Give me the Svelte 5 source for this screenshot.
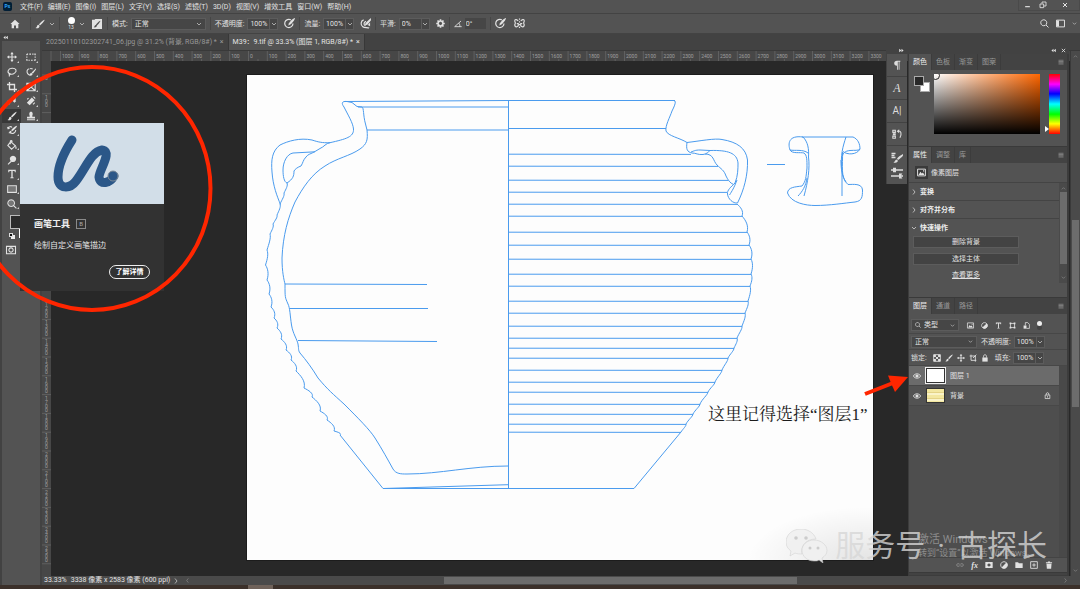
<script>
  const menus = ['文件(F)', '编辑(E)', '图像(I)', '图层(L)', '文字(Y)', '选择(S)', '滤镜(T)', '3D(D)', '视图(V)', '增效工具', '窗口(W)', '帮助(H)'];

  // every icon lives in a 12x12 box: s = stroked path, f = filled path
  const icons = {
    home: { f: 'M6 1 L11.5 6 H10 V11 H7.2 V7.8 H4.8 V11 H2 V6 H.5Z' },
    brush: { f: 'M11.2 .8 C8.5 2 6 4.6 4.8 6.5 L6 7.7 C8 6.2 10.5 3.5 11.6 1.2Z M4.2 7 C2.6 7 2.6 8.4 2.2 9.4 C1.9 10.2 1.2 10.6 .6 10.8 C2.6 11.8 5.4 11 5.5 8.3Z' },
    chev: { s: 'M2 4 L6 8 L10 4' },
    right: { s: 'M4 1 L8 6 L4 11' },
    left: { s: 'M8 1 L4 6 L8 11' },
    up: { s: 'M2 8 L6 4 L10 8' },
    brushPanel: { f: 'M0 1 H3 L4 0 H12 V12 H0Z M9.8 2 C7 3.5 5.5 5.6 4.6 7.2 C3 7.4 3.3 9 2 10 C4 10.5 5.6 10 5.7 8.2 C7.5 6.5 9 4.6 10.2 2.4Z' },
    pressure: { s: 'M7.5 2 A4.5 4.5 0 1 0 9.8 6', f: 'M11.6 0 C8.8 1.4 6.8 3.6 5.4 5.6 L4.6 8.2 L7 7 C9 5.4 11 3 12 .5Z' },
    airbrush: { s: 'M4 2 C.5 3 .5 8 3 9.5 C5 11 8 10 10 11 M6.5 3.5 C3.5 5 4 7.5 6 8.5', f: 'M11.8 0 L6 5.5 L5.4 8 L8 7.4 L12 2.4Z M8.5 7.5 L11 5 V9Z' },
    gear: { s: 'M6 2.7 A3.3 3.3 0 1 0 6.01 2.7 M6 .3 V2 M6 10 V11.7 M.3 6 H2 M10 6 H11.7 M2 2 L3.2 3.2 M8.8 8.8 L10 10 M2 10 L3.2 8.8 M8.8 3.2 L10 2', w: 2.2 },
    angle: { s: 'M10.5 1.5 L1 10 H11.5 M7 4.5 C8.6 6 9 8 8.6 10' },
    butterfly: { s: 'M6 .5 V2 M6 3.5 V5 M6 6.5 V8 M6 9.5 V11 M4.6 3 C1 0 0 2.5 1.5 5.5 C0 8 1.5 11.5 4.6 8.6 V6 H3 M7.4 3 C11 0 12 2.5 10.5 5.5 C12 8 10.5 11.5 7.4 8.6 V6 H9' },
    search: { s: 'M5 1 A4 4 0 1 0 5.01 1 M8 8 L11.3 11.3' },
    layout: { s: 'M.7 1.5 H11.3 V10.5 H.7Z', f: 'M1 2 H4 V10 H1Z' },
    min: { f: 'M2 7 H10 V9 H2Z' },
    restore: { s: 'M1.5 4.5 H7 V10 H1.5Z M4.5 4 V1.5 H10.5 V7.5 H7.5' },
    close: { s: 'M2 2 L10 10 M10 2 L2 10', w: 2 },
    menu: { s: 'M1 2.5 H11 M1 5 H11 M1 7.5 H11 M1 10 H11' },
    dblLeft: { f: 'M6 2 V10 L1 6Z M11.5 2 V10 L6.5 6Z' },
    dblRight: { f: 'M6 2 V10 L11 6Z M.5 2 V10 L5.5 6Z' },
    move: { s: 'M6 1 V11 M1 6 H11', f: 'M6 0 L8 2.6 H4Z M6 12 L8 9.4 H4Z M0 6 L2.6 4 V8Z M12 6 L9.4 4 V8Z' },
    marquee: { s: 'M1 2.5 H2.5 M4 2.5 H6 M7.5 2.5 H9 M10 2.5 H11 V4 M11 5.5 V7 M11 8.5 V9.8 H9.5 M8 9.8 H6 M4.5 9.8 H3 M2 9.8 H1 V8.5 M1 7 V5.5 M1 4 V2.5' },
    lasso: { s: 'M3 8 C0 6.5 .8 2 6 1.6 C11 1.3 12.3 5 9.4 7 C7.5 8.6 4.5 8.8 3 8 C1.8 9 3.6 9.4 2.6 11.4 M3 8 C4.4 7.4 4 9.4 2.4 9' },
    quick: { s: 'M4 2 C1 2.5 .6 6 2 8 C3 9.5 4.5 9.8 5.5 9.8 M5 2 C6 1.6 7 2 8 2.5', f: 'M12 1.6 L6.8 6.6 L8.2 8 L12 3Z M6.3 7 C4.7 7.4 5.2 9 4 10 C6 10.8 7.8 10 7.8 8.4Z' },
    crop: { s: 'M3 0 V9 H12 M0 3 H9 V12', w: 1.6 },
    frame: { s: 'M1 1.5 H11 V10.5 H1Z M1 1.5 L11 10.5 M11 1.5 L1 10.5' },
    eyedrop: { f: 'M1 5 L5 4 L7 2 C9 0 12 2.5 10 5 L11 6 L9 8 L6 5 L3 10 L1 10.5Z' },
    heal: { f: 'M1 8 L7 1.8 L10.4 5 L4.4 11.2Z M8 1 C9.5 0 12 2 11 4Z', s: 'M1.5 4 L3 2.5 M8.4 10 L10.6 8' },
    stamp: { f: 'M4.6 6 C3.6 4 3.6 .8 6 .8 C8.4 .8 8.4 4 7.4 6 L7.8 7 H10.8 V9 H1.2 V7 H4.2Z M1.2 10 H10.8 V11.2 H1.2Z' },
    history: { s: 'M1 4 C2 1.5 5 1.5 6 3 M4 9.5 C7 11.5 10.5 9 10.5 6', f: 'M0 2 L1 5.5 L4 4Z M11.6 1 C9 2 6.2 4.5 5 6.2 L6.2 7.4 C8.4 6 10.8 3.6 12 1.4Z M4.4 6.8 C2.8 7 3.3 8.6 1.6 9.6 C4 10.2 5.5 9.6 5.6 8Z' },
    bucket: { s: 'M4.5 2 L10 7 L5.5 11 L1 6.5Z M4 5 V1.5 C4 .4 6 .4 6 1.5 V4', f: 'M10.2 6 C11 7.5 11.8 9 11.6 10 C11 11.4 9.6 10.6 10 9Z' },
    dodge: { f: 'M7.2 .8 A3.8 3.8 0 1 1 7.19 .8Z M4.6 7 L5.6 8 L1.6 11.6 L.8 10.8Z' },
    type: { f: 'M1.5 1 H10.5 V3.8 H9.5 L9 2.4 H6.8 V9.8 L8 10.2 V11 H4 V10.2 L5.2 9.8 V2.4 H3 L2.5 3.8 H1.5Z' },
    rect: { s: 'M.8 2 H11.2 V10 H.8Z', g: 'M1.5 2.6 H10.5 V9.4 H1.5Z' },
    zoom: { s: 'M5 1 A4 4 0 1 0 5.01 1 M8 8 L11.3 11.3', g: 'M5 2 A3 3 0 1 0 5.01 2' },
    mask: { s: 'M.6 1.6 H11.4 V10.4 H.6Z M6 3.4 A2.6 2.6 0 1 0 6.01 3.4' },
    pilcrow: { f: 'M6 .8 C1.6 .8 1.6 6.8 6 6.8 V11.6 H7 V2 H8 V11.6 H9 V2 H10 V.8Z' },
    actions: { s: 'M1 1.5 H4 V4 H1Z M1 8.5 H4 V11 H1Z M7 2.5 C11 1.5 12 6 9.5 10.5', f: 'M1 5 H4.5 V7.6 H1Z M5.6 2.6 L8.6 .4 V5Z' },
    brushes: { s: 'M.5 1.5 H4.5 M.5 3.5 H3.5 M.5 5.5 H4.5', f: 'M12 2 C9 3.5 7 5 6 6.8 L7 8 C9 6.8 11.2 4.8 12 3.4Z M5.6 7.4 C4 7.6 4.2 9.4 2.4 10.4 C5 11.4 7 10.4 6.8 8.6Z' },
    sliders: { s: 'M0 3 H12 M0 9 H12', f: 'M2 .8 H5 V5.2 H2Z M8 6.4 H11.4 L9.6 9 L11.4 11.6 H8Z' },
    picture: { s: 'M.8 1.5 H11.2 V10.5 H.8Z', f: 'M2 9.4 L4.6 5 L6.4 7.4 L8 6 L10 9.4Z M8 3 H9.6 V4.6 H8Z' },
    adjust: { s: 'M6 1 A5 5 0 1 0 6.01 1', f: 'M9.6 2.4 A5 5 0 0 1 2.4 9.6Z' },
    shape: { s: 'M2.5 2.5 H9.5 V9.5 H2.5Z', f: 'M1 1 H4 V4 H1Z M8 1 H11 V4 H8Z M1 8 H4 V11 H1Z M8 8 H11 V11 H8Z' },
    smart: { s: 'M4 6 V1 H8 L11 4 V11 H6', f: 'M1 6 H6 V11.4 H1Z' },
    checker: { s: 'M1 1 H11 V11 H1Z', f: 'M1 1 H4.4 V4.4 H1Z M7.6 1 H11 V4.4 H7.6Z M4.4 4.4 H7.6 V7.6 H4.4Z M1 7.6 H4.4 V11 H1Z M7.6 7.6 H11 V11 H7.6Z' },
    artboard: { s: 'M3 1 V9.5 H11 M1 3 H9.5 V11.5 M6 6 L11 1' },
    lock: { f: 'M2 5.2 H10 V11.4 H2Z', s: 'M3.8 5.4 V3.4 C3.8 .4 8.2 .4 8.2 3.4 V5.4' },
    lockOpen: { s: 'M2 5.2 H10 V11.2 H2Z M3.8 5.2 V3.4 C3.8 .4 8.2 .4 8.2 3.4 V5.2 M6 7 V9.5' },
    eye: { s: 'M.5 6 C3 1.6 9 1.6 11.5 6 C9 10.4 3 10.4 .5 6Z', f: 'M6 3.6 A2.4 2.4 0 1 0 6.01 3.6' },
    link: { s: 'M5 4 H3 A2 2 0 0 0 3 8 H5 M7 4 H9 A2 2 0 0 1 9 8 H7 M4 6 H8' },
    maskAdd: { f: 'M.5 1.5 H11.5 V10.5 H.5Z M6 3.6 A2.4 2.4 0 1 0 6.01 3.6' },
    folder: { f: 'M.5 2 H4.6 L5.8 3.4 H11.5 V10.5 H.5Z' },
    plus: { s: 'M1 1 H11 V11 H1Z M6 3.4 V8.6 M3.4 6 H8.6' },
    trash: { f: 'M1.4 2 H4.4 V.8 H7.6 V2 H10.6 V3.4 H1.4Z M2.2 4.2 H9.8 L9.2 11.6 H2.8Z' }
  };

  const tools = [
    'move', 'marquee', 'lasso', 'quick', 'crop', 'frame', 'eyedrop', 'heal', 'brush', 'stamp',
    'history', 'heal', 'bucket', 'adjust', 'dodge', 'pressure', 'type', 'move', 'rect', 'move', 'zoom', 'layout'
  ];

  const ticksX = Array.from({ length: 44 }, (_, i) => ({ x: 8 + i * 18.8, label: Math.abs(i - 10) * 100 }));

  // no numbers where the tool hint covers the ruler
  const ticksY = Array.from({ length: 28 }, (_, i) => {
    const y = 14 + (i - 1) * 18.8;
    const shown = (y > 0 && y < 40) || (y > 226 && y < 495);
    return { y, label: shown ? String(Math.abs(i - 1) * 100) : '' };
  });

  // right half of the jar: height of each groove and where it meets the wall
  const grooves = [
    [691, 154], [718, 166], [728, 180], [727, 192], [737, 204], [742, 216], [747, 232], [749, 245], [751, 259],
    [751, 274], [750, 286], [748, 301], [745, 313], [742, 326], [737, 338], [734, 348], [728, 358],
    [722, 370], [715, 382], [708, 392], [700, 404], [693, 414], [686, 424], [681, 432]
  ];

  const leftWall = [
    [287, 183], [284, 193], [280, 204], [277, 215], [273, 224], [270, 234], [267, 250], [265.5, 265], [267, 280],
    [269, 294], [271, 307], [274, 318], [277, 328], [281, 339], [286, 350], [291, 360], [296, 371], [304, 388],
    [312, 397], [320, 411], [327, 420], [334, 431], [340, 435]
  ];

  function scallop(points, bulge) {
    let d = 'M' + points[0];
    for (let i = 1; i < points.length; i++) {
      const [ax, ay] = points[i - 1];
      const [bx, by] = points[i];
      const dx = bx - ax;
      const dy = by - ay;
      d += ` C${ax + dx * 0.3 + bulge} ${ay + dy * 0.25} ${bx + bulge} ${ay + dy * 0.6} ${bx} ${by}`;
    }
    return d;
  }

  const rightEdge = scallop(grooves.slice(4), 2) + ' L634 488.5';
  const leftEdge = scallop(leftWall, 2) + ' L383 488.5';

  const filters = ['picture', 'adjust', 'type', 'shape', 'smart'];
  const locks = ['checker', 'brush', 'move', 'artboard', 'lock'];
  const footer = ['link', 'fx', 'maskAdd', 'adjust', 'folder', 'plus', 'trash'];
</script>

{#snippet icon(name, size = 10)}
  <svg class="icon" width={size} height={size} viewBox="0 0 12 12" aria-hidden="true">
    {#if icons[name].g}<path class="dim" d={icons[name].g} />{/if}
    {#if icons[name].f}<path class="solid" d={icons[name].f} />{/if}
    {#if icons[name].s}<path class="line" d={icons[name].s} stroke-width={icons[name].w ?? 1.3} />{/if}
  </svg>
{/snippet}

{#snippet percent(label, value)}
  <label class="field">
    <span>{label}:</span>
    <span class="num"><input {value} /><span class="drop">{@render icon('chev', 6)}</span></span>
  </label>
{/snippet}

<div class="app">
  <header class="menubar">
    <span class="ps">Ps</span>
    <nav>
      {#each menus as item}<button>{item}</button>{/each}
    </nav>
    <div class="window-buttons">
      <button aria-label="最小化">{@render icon('min', 7)}</button>
      <button aria-label="还原">{@render icon('restore', 8)}</button>
      <button class="wide" aria-label="关闭">{@render icon('close', 6)}</button>
    </div>
  </header>

  <div class="options">
    <button class="home" aria-label="主页">{@render icon('home')}</button>
    <div class="group brush-pick">
      <button aria-label="画笔">{@render icon('brush', 10)}</button>{@render icon('chev', 6)}
    </div>
    <div class="group tip-pick">
      <button class="tip" aria-label="画笔大小"><i></i>13</button>{@render icon('chev', 6)}
      <button class="panel-button" aria-label="画笔设置">{@render icon('brushPanel', 10)}</button>
    </div>
    <div class="group">
      <label class="field"><span>模式:</span>
        <span class="pick mode"><select><option>正常</option></select>{@render icon('chev', 6)}</span>
      </label>
    </div>
    <div class="group">
      {@render percent('不透明度', '100%')}
      <button aria-label="不透明度压力">{@render icon('pressure', 11)}</button>
    </div>
    <div class="group">
      {@render percent('流量', '100%')}
      <button aria-label="喷枪">{@render icon('airbrush', 11)}</button>
    </div>
    <div class="group">
      {@render percent('平滑', '0%')}
      <button aria-label="平滑选项">{@render icon('gear', 9)}</button>
    </div>
    <div class="group angle">
      <label class="field">{@render icon('angle', 8)}<input aria-label="角度" value="0°" /></label>
    </div>
    <div class="group last">
      <button aria-label="大小压力">{@render icon('pressure', 11)}</button>
      <button aria-label="对称">{@render icon('butterfly', 11)}</button>
    </div>
    <div class="options-right">
      <button aria-label="搜索">{@render icon('search', 9)}</button>
      <button aria-label="工作区">{@render icon('layout', 9)}</button>
      {@render icon('chev', 5)}
    </div>
  </div>

  <div class="workspace">
    <aside class="toolbar">
      <div class="collapse">{@render icon('dblLeft', 5)}</div>
      <div class="tool-body">
        <div class="tools">
          {#each tools as tool, i}
            <button class:active={i === 8} aria-label={tool}>{@render icon(tool, 10)}</button>
          {/each}
        </div>
        <div class="swatches"><i class="fore"></i><i class="back"></i><i class="reset"></i></div>
        <button class="quick-mask" aria-label="快速蒙版">{@render icon('mask', 10)}</button>
      </div>
    </aside>

    <main class="document">
      <div class="tabs">
        <button>20250110102302741_06.jpg @ 31.2% (背景, RGB/8#) *<b>×</b></button>
        <button class="current">M39：9.tif @ 33.3% (图层 1, RGB/8#) *<b>×</b></button>
      </div>

      <div class="view">
        <div class="view-main">
          <svg class="ruler-x" aria-hidden="true">
            <line class="edge" x1="9" y1="0" x2="9" y2="10" />
            {#each ticksX as tick}
              <line x1={tick.x + 10.5} y1="0" x2={tick.x + 10.5} y2="10" />
              <line x1={tick.x + 20} y1="8" x2={tick.x + 20} y2="10" />
              <text x={tick.x + 12} y="7">{tick.label}</text>
            {/each}
          </svg>
          <div class="stage-row">
            <svg class="ruler-y" aria-hidden="true">
              {#each ticksY as tick}
                <line x1="0" y1={tick.y} x2="9" y2={tick.y} />
                {#each tick.label as digit, n}
                  <text x="3" y={tick.y + 5 + n * 4}>{digit}</text>
                {/each}
              {/each}
            </svg>
            <div class="stage">
              <svg class="artboard" width="626" height="485" viewBox="247 75 626 485">
                <defs>
                  <radialGradient id="haze" cx="0.5" cy="0.65" r="0.5">
                    <stop offset="0" stop-color="#000" stop-opacity=".1" />
                    <stop offset="1" stop-color="#000" stop-opacity="0" />
                  </radialGradient>
                </defs>
                <g class="drawing">
                  <path d="M345 101.5 L508 100.5 L675 100.5" />
                  <path d="M358 107 H508 M367 130 H508 M508 128.5 H666" />
                  <path d="M508.5 100.5 V488.5 M383 488.5 H634" />
                  <path d="M285 284 L427 284.5 M289.5 308.5 H428 M298 340.5 L437 341.5" />
                  <path d="M347 101.5 C342 101 341 103 344 107 C348 115 353 123 353.5 129 C354 137 346 139 330 142.7 C322 143 318 142 312 140 C300 137.5 288 141 280 145 C272 151 271 160 272 172 C273 186 277 196 280.5 204.5" />
                  <path d="M330 142.7 C326 143 324 147 320 148.5 L315 151.5 C311 154 308 154 306 157 C303 160 303 163 301 166 C298 167 295 169 294 171 C294 176 293 179 287 183 C284 182 283 176 283 170 C283 162 287 154 293 153 L315 151.8" />
                  <path d={leftEdge} />
                  <path d="M347 101.5 L352 102.5 L357 106.5 L362 107 C364 108 363 115 365.5 124 L367 130 C368 140 367 144 360 149 C350 156 337 158 325 166 C312 174 303 187 295 202 C288 218 283 235 282 258 C282 272 284 280 285 284 C285 298 285 297 288 304 C290 308 290 315 291.5 325 C293 334 297 339 298 344 C299 350 298 350 300 353 C306 360 312 368 318 378 C328 390 333 394 344 404 C358 418 370 430 375 438 C382 449 388 460 393 469 C396 474 401 474 407 474 C440 474 470 466 508 466 M383 488.5 L508 484.7" />
                  {#each grooves as [x, y]}
                    <path d="M508 {y + 0.2} L{x} {y + 0.4}" />
                  {/each}
                  <path d={rightEdge} />
                  <path d="M674 100.5 C677 101 674 107 672 111 C670 117 665 126 666 131 C668 136 680 138 687 142.5 C700 141 715 138 722 139.5 C737 142 746 148 747.5 160 C748 175 744 190 737.5 203 C733 203.5 728 199 727.5 194 C727 190 731 187 735 183 C738 176 738 168 738 163 C737 153 728 150 710 150.5 L700 150 C695 150 694 151 691 152 M687 142.5 C686 149 687 152 692 153 C696 153 698 155 703 154.5 C707 154 708 152 710 150.5" />
                  <path d="M705 154 C714 154 713 161 717 165 C721 169 724 170 726 176 C728 180 730 183 733.5 184.5 M737 180 C734 188 732 191 729.5 195" />
                  <path d="M767 164.5 H785" />
                  <path d="M802 137 H853 C858 139 860 144 860 149 C858 151 855 150 850 150.5 C845 151 843 153 842.5 156 M843 151.5 C847 155 857 155 860 149" />
                  <path d="M803 137 C788 135 788 144 790 150 C792 154 800 152 804 153 C807 155 807 160 807 168 C806 177 806 181 802 186 C795 187 788 187 787.5 193 C791 203 806 205.5 815 205.5 C830 205.5 845 203 855 202 C862 201 862.5 197 862.5 190 C862 183 853 184.5 848 184.5 C840 178 843 165 842.5 152" />
                  <path d="M803 137 C808 142 809 149 808.5 157 C810 168 808 182 804 196 M807 178 C806 186 802 192 798 196 M790 150 C795 151 803 149 808 153 M846 137 C843 146 840 156 842 170 L842 196 M841 160 C841 170 842 176 846 182" />
                </g>
                <rect x="747" y="490" width="240" height="110" fill="url(#haze)" />
                <text class="note" x="708" y="420">这里记得选择“图层1”</text>
              </svg>
            </div>
          </div>
        </div>
        <div class="scroll-y">
          {@render icon('up', 5)}<i></i>{@render icon('chev', 5)}
        </div>
      </div>

      <footer class="status">
        <span>33.33%</span>
        <span class="size">3338 像素 x 2583 像素 (600 ppi)</span>
        {@render icon('right', 6)}
        <div class="scroll-x">{@render icon('left', 5)}<i></i>{@render icon('right', 5)}</div>
      </footer>

      <div class="dock">
        <div class="dock-head">
          {@render icon('dblRight', 5)}<span></span>{@render icon('dblLeft', 5)}{@render icon('close', 5)}
        </div>
        <div class="dock-body">
          <div class="strip">
            <button aria-label="段落">{@render icon('pilcrow', 10)}</button>
            <button class="script" aria-label="字形">A</button>
            <button class="char" aria-label="字符">A|</button>
            <button aria-label="动作">{@render icon('actions', 10)}</button>
            <div class="pair">
              <button aria-label="画笔">{@render icon('brushes', 12)}</button>
              <button aria-label="画笔设置">{@render icon('sliders', 12)}</button>
            </div>
          </div>

          <div class="panels">
            <section class="color">
              <div class="panel-tabs">
                <button class="on">颜色</button><button>色板</button><button>渐变</button><button>图案</button>
                {@render icon('menu', 6)}
              </div>
              <div class="color-body">
                <div class="chips"><i class="fg"></i><i class="bg"></i></div>
                <div class="field-box"></div>
                <div class="hue"></div>
              </div>
            </section>

            <section class="props">
              <div class="panel-tabs">
                <button class="on">属性</button><button>调整</button><button>库</button>
                {@render icon('menu', 6)}
              </div>
              <div class="kind"><span>{@render icon('picture', 9)}</span>像素图层</div>
              <div class="props-body">
                <div class="props-list">
                  <h3>{@render icon('right', 6)}变换</h3>
                  <h3>{@render icon('right', 6)}对齐并分布</h3>
                  <h3 class="open">{@render icon('chev', 6)}快速操作</h3>
                  <div class="quick">
                    <button>删除背景</button>
                    <button>选择主体</button>
                    <a href="#more">查看更多</a>
                  </div>
                </div>
                <div class="mini-scroll">{@render icon('up', 5)}<i></i>{@render icon('chev', 5)}</div>
              </div>
            </section>

            <section class="layers">
              <div class="panel-tabs">
                <button class="on">图层</button><button>通道</button><button>路径</button>
                {@render icon('menu', 6)}
              </div>
              <div class="layer-row filter">
                <label class="pick kind-pick">{@render icon('search', 6)}<select aria-label="类型"><option>类型</option></select>{@render icon('chev', 5)}</label>
                <div class="filters">
                  {#each filters as name}<button aria-label={name}>{@render icon(name, 7)}</button>{/each}
                  <i class="switch"></i>
                </div>
              </div>
              <div class="layer-row">
                <label class="pick blend"><select aria-label="混合模式"><option>正常</option></select>{@render icon('chev', 5)}</label>
                {@render percent('不透明度', '100%')}
              </div>
              <div class="layer-row">
                <span class="lock-label">锁定:</span>
                <div class="locks">
                  {#each locks as name}<button aria-label={name}>{@render icon(name, 8)}</button>{/each}
                </div>
                {@render percent('填充', '100%')}
              </div>
              <ul>
                <li class="selected">{@render icon('eye', 8)}<span class="thumb"></span>图层 1</li>
                <li>{@render icon('eye', 8)}<span class="thumb map"></span>背景<span class="lock">{@render icon('lockOpen', 7)}</span></li>
              </ul>
              <div class="layer-footer">
                {#each footer as name}
                  <button class:off={name === 'link'} aria-label={name}>
                    {#if name === 'fx'}<em>fx</em>{:else}{@render icon(name, 8)}{/if}
                  </button>
                {/each}
              </div>
            </section>
          </div>
        </div>
      </div>
    </main>
  </div>

  <div class="taskbar"><i></i></div>

  <div class="tooltip">
    <svg viewBox="0 0 144 81">
      <path d="M52 17 C43 31 38 45 38 54 C38 67 50 66 56 58 C66 45 71 29 82 27 C93 28 79 47 79 54 C80 63 90 60 94 53" />
      <circle cx="93" cy="53" r="5" />
    </svg>
    <div class="tooltip-text">
      <h2>画笔工具 <kbd>B</kbd></h2>
      <p>绘制自定义画笔描边</p>
      <button>了解详情</button>
    </div>
  </div>

  <svg class="marks" width="1080" height="589" aria-hidden="true">
    <ellipse cx="92" cy="188.5" rx="118.5" ry="121.5" />
    <path class="shaft" d="M865 394 L893 383" />
    <path class="head" d="M908 377 L888 375.5 L891 383 L895 392Z" />
  </svg>

  <div class="activate">
    <p>激活 Windows</p>
    <small>转到“设置”以激活 Windows。</small>
  </div>

  <div class="watermark">
    <svg width="42" height="34" viewBox="0 0 42 34">
      <path d="M15 0 C6 0 0 6 0 13 C0 17 2 20 5 22 L4 27 L9 24 C11 25 14 25 16 25 C14 17 20 10 30 10 C28 4 22 0 15 0Z" />
      <path d="M28 11 C21 11 16 16 16 21.5 C16 27 21 32 28 32 C30 32 32 32 33 31 L37 34 L36 29 C39 27 41 25 41 21.5 C41 16 35 11 28 11Z" />
      <g><circle cx="10" cy="9" r="1.8" /><circle cx="20" cy="9" r="1.8" /><circle cx="24" cy="19" r="1.5" /><circle cx="32" cy="19" r="1.5" /></g>
    </svg>
    <div class="account"><span>服务号</span><span>·</span><span>古探长</span></div>
  </div>
</div>

<style>
  :global(body) {
    margin: 0;
    background: #282828;
    overflow: hidden;
  }

  .app {
    position: relative;
    display: flex;
    flex-direction: column;
    height: 100vh;
    overflow: hidden;
    color: #e2e2e2;
    font: 7px/10px Roboto, "Noto Sans CJK SC", sans-serif;
  }

  .app :is(*, *::before, *::after) {
    box-sizing: border-box;
  }

  button, input, select {
    margin: 0;
    padding: 0;
    border: 0;
    background: none;
    color: inherit;
    font: inherit;
    white-space: nowrap;
  }

  button {
    display: flex;
    align-items: center;
    justify-content: center;
  }

  i {
    display: block;
  }

  .icon {
    flex: none;
    display: block;
    overflow: visible;
  }

  .icon path {
    fill: none;
  }

  .icon .solid {
    fill: currentColor;
    fill-rule: evenodd;
  }

  .icon .dim {
    fill: #777;
  }

  .icon .line {
    stroke: currentColor;
  }

  /* top bars */
  .menubar {
    display: flex;
    align-items: center;
    height: 14px;
    padding-left: 3px;
    background: #535353;
    border-bottom: 1px solid #434343;
  }

  .ps {
    width: 9px;
    height: 9px;
    border-radius: 2px;
    background: #001e36;
    color: #31a8ff;
    font-size: 5px;
    font-weight: 700;
    line-height: 9px;
    text-align: center;
  }

  nav {
    display: flex;
    gap: 5px;
    margin-left: 8px;
  }

  .window-buttons {
    display: flex;
    height: 11px;
    margin: 0 0 2px auto;
    border: 1px solid #4a4a4a;
    border-top: 0;
  }

  .window-buttons button {
    width: 16px;
  }

  .window-buttons .wide {
    width: 28px;
  }

  .options {
    display: flex;
    align-items: center;
    height: 20px;
    background: #535353;
    border-bottom: 1px solid #434343;
  }

  .home {
    width: 30px;
  }

  .group {
    display: flex;
    align-items: center;
    gap: 6px;
    height: 13px;
    padding: 0 4px;
    border-left: 1px solid #464646;
  }

  .brush-pick {
    gap: 4px;
  }

  .tip-pick {
    gap: 1px;
  }

  .tip {
    flex-direction: column;
    width: 14px;
    font-size: 5px;
    line-height: 7px;
  }

  .tip i {
    width: 7px;
    height: 7px;
    border-radius: 50%;
    background: #fff;
  }

  .panel-button {
    margin: 0 1px 0 6px;
  }

  .field {
    display: flex;
    align-items: center;
    gap: 3px;
  }

  .num {
    display: flex;
    height: 12px;
    border: 1px solid #5c5c5c;
    background: #464646;
  }

  .num input {
    width: 21px;
    padding-left: 2px;
  }

  .drop {
    display: flex;
    align-items: center;
    justify-content: center;
    width: 8px;
    border-left: 1px solid #5c5c5c;
  }

  .pick {
    display: flex;
    align-items: center;
    height: 12px;
    padding: 0 3px;
    border: 1px solid #5c5c5c;
    background: #464646;
  }

  .pick select {
    flex: 1;
    min-width: 0;
    appearance: none;
  }

  .mode {
    width: 75px;
  }

  .angle input {
    width: 21px;
    height: 11px;
    padding-left: 1px;
    background: #464646;
  }

  .last {
    gap: 8px;
  }

  .options-right {
    display: flex;
    align-items: center;
    gap: 7px;
    margin-left: auto;
    padding-right: 3px;
  }

  /* tools */
  .workspace {
    display: flex;
    flex: 1;
    min-height: 0;
    background: #424242;
  }

  .toolbar {
    display: flex;
    flex-direction: column;
    width: 42px;
    padding: 0 2px;
  }

  .collapse {
    height: 7px;
    padding: 1px;
  }

  .tool-body {
    flex: 1;
    padding-top: 9px;
    background: #535353;
  }

  .tools {
    display: grid;
    grid-template-columns: 1fr 1fr;
    grid-auto-rows: 1fr;
    height: 161px;
  }

  .tools button {
    position: relative;
  }

  .tools button::after {
    content: "";
    position: absolute;
    right: 2px;
    bottom: 2px;
    border: 1px solid;
    border-color: transparent #ccc #ccc transparent;
  }

  .tools .active {
    background: #383838;
  }

  .swatches {
    position: relative;
    isolation: isolate;
    height: 30px;
  }

  .swatches i {
    position: absolute;
  }

  .fore {
    left: 8px;
    top: 4px;
    z-index: 1;
    width: 14px;
    height: 14px;
    border: 1px solid #bbb;
    background: #2b2b2b;
  }

  .back {
    left: 17px;
    top: 14px;
    width: 14px;
    height: 13px;
    background: #fff;
  }

  .reset {
    left: 7px;
    top: 22px;
    width: 4px;
    height: 4px;
    background: #111;
    border: 1px solid #ddd;
    box-shadow: 2px 2px #eee;
  }

  .quick-mask {
    width: 18px;
    height: 18px;
  }

  /* document */
  .document {
    position: relative;
    display: flex;
    flex: 1;
    flex-direction: column;
    min-width: 0;
  }

  .tabs {
    display: flex;
    height: 17px;
    border-bottom: 1px solid #393939;
  }

  .tabs button {
    gap: 3px;
    padding: 0 4px;
    border-right: 1px solid #383838;
    color: #989898;
  }

  .tabs .current {
    background: #535353;
    color: #e4e4e4;
  }

  .tabs b {
    font-weight: 400;
  }

  .view {
    display: flex;
    flex: 1;
    min-height: 0;
  }

  .view-main {
    display: flex;
    flex: 1;
    flex-direction: column;
    min-width: 0;
  }

  .ruler-x {
    width: 100%;
    height: 10px;
    background: #474747;
  }

  .ruler-y {
    width: 9px;
    height: 100%;
    background: #474747;
  }

  .ruler-x line,
  .ruler-y line {
    stroke: #606060;
  }

  .ruler-x text,
  .ruler-y text {
    fill: #a0a0a0;
    font-size: 5px;
  }

  .stage-row {
    display: flex;
    flex: 1;
    min-height: 0;
  }

  .stage {
    flex: 1;
    padding: 14px 0 0 196px;
    background: #282828;
  }

  .artboard {
    display: block;
    background: #fdfdfd;
    box-shadow: 0 0 0 1px #1c1c1c;
  }

  .drawing path {
    fill: none;
    stroke: #4a9bee;
    stroke-width: 1;
  }

  .note {
    fill: #1c1c1c;
    font: 17px "Liberation Serif", "Noto Serif CJK SC", "Noto Sans CJK SC", serif;
  }

  .scroll-y {
    display: flex;
    flex-direction: column;
    align-items: center;
    width: 10px;
    padding: 3px 0;
    border-left: 1px solid #3a3a3a;
    background: #4a4a4a;
    color: #999;
  }

  .scroll-y i {
    width: 7px;
    height: 36%;
    margin: 161px 0 auto;
    background: #6c6c6c;
  }

  .status {
    display: flex;
    align-items: center;
    gap: 3px;
    height: 9px;
    padding-left: 2px;
    background: #4a4a4a;
    line-height: 9px;
    white-space: nowrap;
  }

  .size {
    padding-left: 1px;
  }

  .scroll-x {
    display: flex;
    flex: 1;
    align-items: center;
    height: 9px;
    padding: 0 12px 0 3px;
    color: #999;
  }

  .scroll-x i {
    width: 40%;
    height: 7px;
    margin: 0 auto 0 254px;
    background: #6c6c6c;
  }

  .taskbar {
    height: 4px;
    padding-left: 248px;
    background: #3b302a;
  }

  .taskbar i {
    width: 25px;
    height: 4px;
    background: #6f625a;
  }

  /* floating panels */
  .dock {
    position: absolute;
    top: 13px;
    right: 11px;
    bottom: 9px;
    display: flex;
    flex-direction: column;
    width: 183px;
  }

  .dock-head {
    display: flex;
    align-items: center;
    gap: 5px;
    height: 7px;
    padding: 0 3px 0 13px;
    background: #424242;
  }

  .dock-head span {
    flex: 1;
  }

  .dock-body {
    display: flex;
    flex: 1;
    align-items: flex-start;
    gap: 1px;
    min-height: 0;
  }

  .strip {
    width: 21px;
    background: #535353;
    border-left: 1px solid #424242;
    color: #ddd;
  }

  .strip button {
    width: 100%;
    height: 23px;
    border-bottom: 1px solid #424242;
  }

  .strip .pair {
    padding: 4px 0;
  }

  .strip .pair button {
    height: 15px;
    border: 0;
  }

  .strip .script {
    font: italic 12px "Liberation Serif", serif;
  }

  .strip .char {
    font-size: 10px;
  }

  .panels {
    display: flex;
    flex: 1;
    flex-direction: column;
    height: 100%;
    padding-bottom: 2px;
    border: 1px solid #3c3c3c;
    border-width: 0 2px 1px 1px;
    background: #424242;
  }

  section {
    background: #535353;
    border-bottom: 1px solid #3a3a3a;
  }

  .panel-tabs {
    display: flex;
    align-items: center;
    height: 16px;
    padding-right: 3px;
    background: #434343;
    color: #999;
  }

  .panel-tabs button {
    height: 16px;
    padding: 0 4px;
    border-right: 1px solid #3c3c3c;
  }

  .panel-tabs .on {
    background: #535353;
    color: #f0f0f0;
  }

  .panel-tabs :global(svg) {
    margin-left: auto;
  }

  .color {
    height: 93px;
  }

  .color-body {
    display: flex;
    padding: 4px 7px 0 5px;
  }

  .chips {
    position: relative;
    width: 20px;
  }

  .chips i {
    position: absolute;
    width: 10px;
    height: 10px;
    border: 1px solid #aaa;
  }

  .chips .fg {
    top: 2px;
    z-index: 1;
    background: #282828;
  }

  .chips .bg {
    top: 8px;
    left: 6px;
    background: #fff;
  }

  .field-box {
    position: relative;
    flex: 1;
    height: 60px;
    overflow: hidden;
    background: linear-gradient(transparent, #000), linear-gradient(90deg, #fff, #f60);
  }

  .field-box::before {
    content: "";
    position: absolute;
    left: -3px;
    top: -3px;
    width: 7px;
    height: 7px;
    border: 1px solid #222;
    border-radius: 50%;
  }

  .hue {
    position: relative;
    width: 11px;
    height: 60px;
    margin-left: 9px;
    background: linear-gradient(#f00, #f0f 17%, #00f 33%, #0ff 50%, #0f0 67%, #ff0 83%, #f00);
  }

  .hue::before {
    content: "";
    position: absolute;
    left: -4px;
    bottom: 2px;
    border: 3px solid transparent;
    border-left: 4px solid #fff;
    border-right: 0;
  }

  .props {
    height: 151px;
  }

  .kind {
    display: flex;
    align-items: center;
    gap: 3px;
    height: 20px;
    padding-left: 6px;
    border-bottom: 1px solid #444;
  }

  .kind span {
    padding: 2px;
    background: #3a3a3a;
  }

  .props-body {
    display: flex;
  }

  .props-list {
    flex: 1;
  }

  h3 {
    display: flex;
    align-items: center;
    gap: 3px;
    height: 18px;
    margin: 0;
    padding-left: 2px;
    border-bottom: 1px solid #444;
    color: #eee;
    font-size: 7px;
  }

  h3.open {
    height: 17px;
    border: 0;
  }

  .quick {
    display: flex;
    flex-direction: column;
    gap: 5px;
    width: 110px;
    padding-left: 4px;
  }

  .quick button {
    height: 12px;
    border: 1px solid #5c5c5c;
    background: #434343;
  }

  .quick a {
    color: inherit;
    text-align: center;
    text-underline-offset: 1px;
  }

  .mini-scroll {
    display: flex;
    flex-direction: column;
    align-items: center;
    justify-content: space-between;
    width: 8px;
    height: 100px;
    padding: 3px 0;
    background: #4a4a4a;
    color: #999;
  }

  .mini-scroll i {
    width: 7px;
    height: 72px;
    margin-bottom: 10px;
    background: #6c6c6c;
  }

  .layers {
    display: flex;
    flex: 1;
    flex-direction: column;
  }

  .layer-row {
    display: flex;
    align-items: center;
    gap: 4px;
    height: 16px;
    padding-left: 2px;
    border-bottom: 1px solid #474747;
  }

  .filter {
    height: 20px;
    padding-top: 3px;
  }

  .kind-pick {
    gap: 3px;
    width: 48px;
  }

  .blend {
    width: 66px;
  }

  .filters,
  .locks {
    display: flex;
    align-items: center;
    gap: 7px;
  }

  .filters {
    margin-left: 4px;
  }

  .locks {
    gap: 4px;
    margin: 0 2px;
  }

  .switch {
    width: 5px;
    height: 5px;
    margin-bottom: 4px;
    border-radius: 50%;
    background: #eee;
    box-shadow: 0 4px #444;
  }

  ul {
    flex: 1;
    margin: 0;
    padding: 0 8px 0 0;
    list-style: none;
    background: linear-gradient(270deg, #494949 8px, #4e4e4e 8px);
  }

  li {
    display: flex;
    align-items: center;
    gap: 5px;
    height: 20px;
    padding: 0 8px 0 4px;
    border-bottom: 1px solid #484848;
    background: #535353;
  }

  li.selected {
    background: #6b6b6b;
  }

  .thumb {
    width: 19px;
    height: 15px;
    border: 1px solid #333;
    background: #fff;
  }

  .selected .thumb {
    outline: 1px solid #eee;
  }

  .thumb.map {
    background: repeating-linear-gradient(#f3e7a0 0 3px, #e4d386 3px 4px, #faf3c8 4px 6px);
  }

  .lock {
    margin-left: auto;
  }

  .layer-footer {
    display: flex;
    gap: 7px;
    justify-content: flex-end;
    height: 15px;
    padding-right: 14px;
    border-top: 1px solid #444;
  }

  .off {
    color: #888;
  }

  em {
    font: italic 700 8px "Liberation Serif", serif;
  }

  /* tool hint */
  .tooltip {
    position: absolute;
    left: 20px;
    top: 123px;
    width: 144px;
    background: #323232;
  }

  .tooltip svg {
    display: block;
    background: #d2dee8;
  }

  .tooltip path {
    fill: none;
    stroke: #2b5788;
    stroke-width: 9;
    stroke-linecap: round;
    stroke-linejoin: round;
  }

  .tooltip circle {
    fill: #2b5788;
    stroke: #7d8b98;
  }

  .tooltip-text {
    display: flex;
    flex-direction: column;
    gap: 10px;
    padding: 14px 14px 12px;
  }

  .tooltip h2 {
    display: flex;
    align-items: center;
    gap: 6px;
    margin: 0;
    color: #f0f0f0;
    font-size: 9px;
    line-height: 12px;
  }

  kbd {
    width: 10px;
    height: 10px;
    border: 1px solid #8a8a8a;
    color: #aaa;
    font: 6px/8px Roboto, sans-serif;
    text-align: center;
  }

  .tooltip p {
    margin: 0;
    font-size: 8px;
    line-height: 12px;
  }

  .tooltip button {
    align-self: flex-end;
    width: 41px;
    height: 14px;
    margin-top: 3px;
    border: 1px solid #eee;
    border-radius: 7px;
    color: #fff;
    font-weight: 700;
  }

  .marks {
    position: absolute;
    left: 0;
    top: 0;
    pointer-events: none;
  }

  .marks ellipse,
  .marks .shaft {
    fill: none;
    stroke: #ff2600;
    stroke-width: 4;
  }

  .marks .head {
    fill: #ff2600;
  }

  .activate {
    position: absolute;
    left: 918px;
    bottom: 30px;
    color: #8c8c8c;
    white-space: nowrap;
  }

  .activate p {
    margin: 0;
    font-size: 11px;
    line-height: 15px;
  }

  .activate small {
    display: block;
    font-size: 9px;
    line-height: 12px;
  }

  .watermark {
    position: absolute;
    right: 33px;
    bottom: 23px;
    display: flex;
    align-items: center;
    gap: 7px;
    color: rgba(215, 215, 215, 0.8);
    font-size: 30px;
    line-height: 40px;
    white-space: nowrap;
  }

  .account {
    display: flex;
    gap: 12px;
  }

  .watermark path {
    fill: rgba(240, 240, 240, 0.9);
    stroke: #ccc;
    stroke-width: 0.5;
  }

  .watermark g {
    fill: #ccc;
  }
</style>
